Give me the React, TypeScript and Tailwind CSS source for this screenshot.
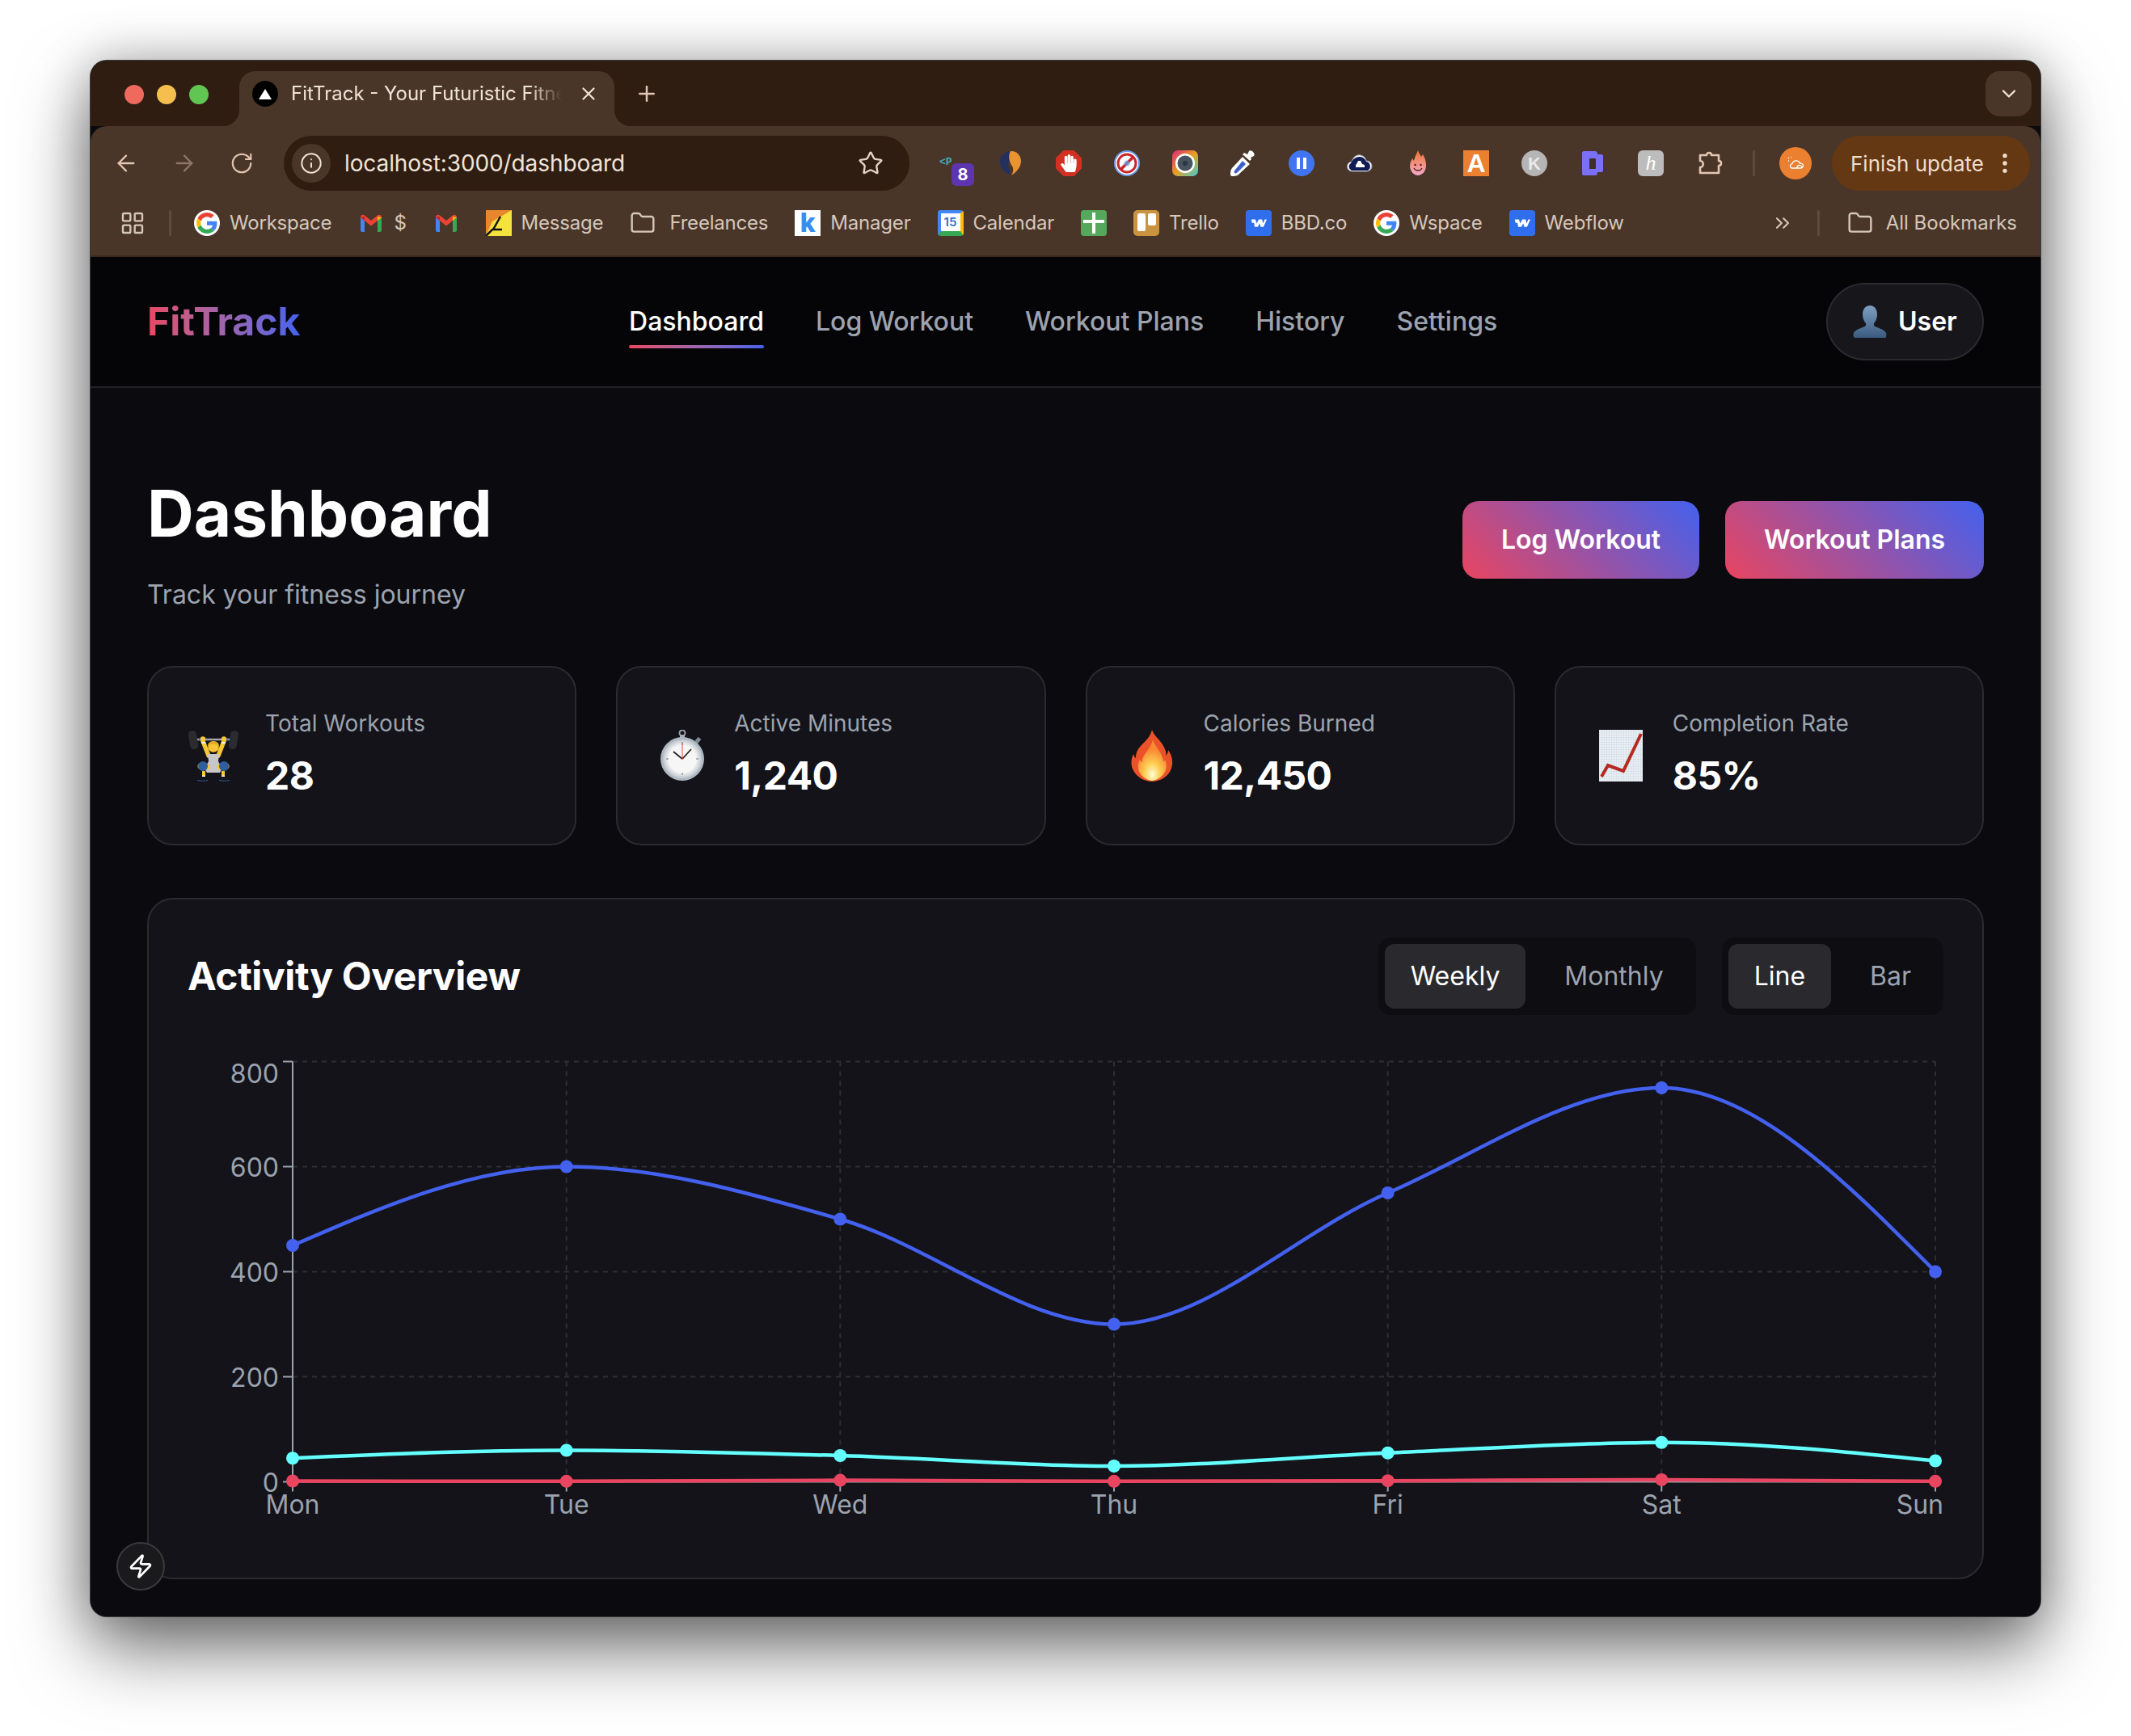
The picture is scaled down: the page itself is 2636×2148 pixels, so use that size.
import { ChevronDown, ArrowLeft, ArrowRight, RotateCw, Star, Info, Plus, X, EllipsisVertical, ChevronsRight, Folder, Zap, LayoutGrid } from "lucide-react";
import { FaHandPaper } from "react-icons/fa";

const DAYS = ["Mon", "Tue", "Wed", "Thu", "Fri", "Sat", "Sun"];
const XS = [362, 700.7, 1039.3, 1378, 1716.7, 2055.3, 2394];
const MINUTES = [450, 600, 500, 300, 550, 750, 400];
const KCAL = [45, 60, 50, 30, 55, 75, 40];
const WORKOUTS = [1.5, 1, 3, 1, 2, 4, 1];
const Y0 = 1833.5;
const yOf = (v: number) => Y0 - v * 0.65;

// same maths as d3 curveMonotoneX, the curve recharts uses for type="monotone"
function monotonePath(values: number[]) {
  const ys = values.map(yOf);
  const n = ys.length;
  const t: number[] = new Array(n).fill(0);
  for (let i = 1; i < n - 1; i++) {
    const h0 = XS[i] - XS[i - 1];
    const h1 = XS[i + 1] - XS[i];
    const s0 = (ys[i] - ys[i - 1]) / h0;
    const s1 = (ys[i + 1] - ys[i]) / h1;
    const p = (s0 * h1 + s1 * h0) / (h0 + h1);
    t[i] = (Math.sign(s0) + Math.sign(s1)) * Math.min(Math.abs(s0), Math.abs(s1), 0.5 * Math.abs(p)) || 0;
  }
  t[0] = (3 * (ys[1] - ys[0]) / (XS[1] - XS[0]) - t[1]) / 2;
  t[n - 1] = (3 * (ys[n - 1] - ys[n - 2]) / (XS[n - 1] - XS[n - 2]) - t[n - 2]) / 2;
  let d = `M${XS[0]},${ys[0]}`;
  for (let i = 0; i < n - 1; i++) {
    const dx = (XS[i + 1] - XS[i]) / 3;
    d += `C${XS[i] + dx},${ys[i] + dx * t[i]} ${XS[i + 1] - dx},${ys[i + 1] - dx * t[i + 1]} ${XS[i + 1]},${ys[i + 1]}`;
  }
  return d;
}

function GoogleIcon() {
  return (
    <span className="flex size-8 shrink-0 items-center justify-center rounded-full bg-white">
      <svg viewBox="0 0 48 48" className="size-[26px]">
        <path fill="#EA4335" d="M24 9.5c3.5 0 6.7 1.2 9.2 3.6l6.9-6.9C35.9 2.4 30.5 0 24 0 14.6 0 6.5 5.4 2.6 13.2l8 6.2C12.5 13.7 17.8 9.5 24 9.5z" />
        <path fill="#4285F4" d="M46.9 24.5c0-1.6-.1-3.1-.4-4.5H24v9h12.9c-.6 3-2.2 5.500-4.700 7.200l7.700 6c4.500-4.200 7-10.300 7-17.700z" />
        <path fill="#FBBC05" d="M10.500 28.600c-.5-1.400-.8-3-.8-4.600s.3-3.200.8-4.600l-8-6.200C.9 16.500 0 20.100 0 24s.9 7.500 2.600 10.800l7.900-6.200z" />
        <path fill="#34A853" d="M24 48c6.500 0 11.900-2.100 15.900-5.800l-7.700-6c-2.100 1.400-4.900 2.300-8.200 2.300-6.200 0-11.500-4.200-13.400-9.900l-8 6.200C6.500 42.600 14.600 48 24 48z" />
      </svg>
    </span>
  );
}

function GmailIcon() {
  return (
    <svg viewBox="0 0 32 32" className="size-8 shrink-0">
      <path fill="#4285F4" d="M3 8h5v19H5a2 2 0 0 1-2-2z" />
      <path fill="#34A853" d="M24 8h5v17a2 2 0 0 1-2 2h-3z" />
      <path fill="#EA4335" d="M3 9c0-3 3-4 5-2.500l8 6.500 8-6.500c2-1.500 5-.5 5 2.500l-5 4-8 6.500L8 13z" />
      <path fill="#C5221F" d="M3 9l5 4V8z" />
      <path fill="#FBBC05" d="M29 9l-5 4V8z" />
    </svg>
  );
}

function WebflowIcon() {
  return (
    <span className="flex size-8 shrink-0 items-center justify-center rounded-[4px] bg-[#2f6fed]">
      <svg viewBox="0 0 24 16" className="w-[20px]">
        <path fill="#fff" d="M1 3h6l2 6 3-6h5l1.500 6L21 3h3l-5 11h-4l-1.500-5-3 5H6L5 8H2z" />
      </svg>
    </span>
  );
}

function Bookmark({ icon, label, wide }: { icon: React.ReactNode; label?: string; wide?: boolean }) {
  return (
    <div className={`flex shrink-0 items-center ${wide ? "gap-[17px]" : "gap-3"}`}>
      {icon}
      {label && <span className="text-[24px] leading-8 tracking-[-0.2px] whitespace-nowrap text-[#d5c7bc]">{label}</span>}
    </div>
  );
}

function Ext({ children }: { children: React.ReactNode }) {
  return <div className="relative flex h-[68px] w-[72px] shrink-0 items-center justify-center">{children}</div>;
}

function Extensions() {
  return (
    <div className="ml-[17px] flex items-center">
      <Ext>
        <span className="absolute top-[25px] left-[20px] font-['Liberation_Mono',monospace] text-[13px] leading-4 font-bold text-[#47a9b8]">&lt;P</span>
        <span className="absolute top-[34px] left-[35px] flex h-[28px] w-[28px] items-center justify-center rounded-[6px] bg-[#5e35b1] text-[20px] font-bold text-white">8</span>
      </Ext>
      <Ext>
        <svg viewBox="0 0 32 32" className="size-8">
          <path fill="#24305e" d="M14 1C7 3 2 9 3 16c1 7 6 12 12 14 2-6-4-8-1-14 2-4 3-10 0-15z" />
          <path fill="#ea9331" d="M16 1c7-1 13 5 13 12 0 8-6 14-12 18 3-5 3-9 0-13-3-5-4-12-1-17z" />
        </svg>
      </Ext>
      <Ext>
        <span className="flex size-8 items-center justify-center bg-[#d32f23] [clip-path:polygon(30%_0,70%_0,100%_30%,100%_70%,70%_100%,30%_100%,0_70%,0_30%)]">
          <FaHandPaper className="size-[22px] text-white" />
        </span>
      </Ext>
      <Ext>
        <svg viewBox="0 0 32 32" className="size-8">
          <circle cx="16" cy="16" r="15" fill="#fff" stroke="#6a9bea" strokeWidth="2" />
          <circle cx="16" cy="16" r="11" fill="none" stroke="#c9262c" strokeWidth="3" />
          <path d="M8.500 23.500 23.500 8.500" stroke="#c9262c" strokeWidth="3.500" />
          <circle cx="16" cy="16" r="3.500" fill="#6a9bea" opacity=".7" />
        </svg>
      </Ext>
      <Ext>
        <svg viewBox="0 0 32 32" className="size-8">
          <defs>
            <linearGradient id="camGrad" x1="0" y1="0" x2="1" y2="1">
              <stop offset="0" stopColor="#e0247e" />
              <stop offset=".5" stopColor="#e8a020" />
              <stop offset="1" stopColor="#3fd0d8" />
            </linearGradient>
          </defs>
          <rect width="32" height="32" rx="7" fill="url(#camGrad)" />
          <circle cx="16" cy="16" r="12" fill="#fff" />
          <circle cx="16" cy="16" r="9.500" fill="#47535f" />
          <circle cx="16" cy="16" r="3" fill="#2c353e" />
        </svg>
      </Ext>
      <Ext>
        <svg viewBox="0 0 32 32" className="size-8">
          <path fill="#fff" d="M21 5l2-4c1-1 3-1 5 1 2 2 2 4 1 5l-4 2 1 2-2 2-9-8 2-2z" />
          <path fill="#fff" d="M15 8l9 9L10 30c-2 2-6 2-8 2-1 0-2-1-2-2 0-2 0-6 2-8z" />
          <path fill="#3d5fc9" d="M15 13l4 4-10 10c-1 1-3 2-4 1-1-1 0-3 1-4z" />
        </svg>
      </Ext>
      <Ext>
        <span className="flex size-8 items-center justify-center gap-[4px] rounded-full bg-[#4074f0]">
          <span className="h-[14px] w-[4px] bg-white" />
          <span className="h-[14px] w-[4px] bg-white" />
        </span>
      </Ext>
      <Ext>
        <svg viewBox="0 0 32 24" className="w-8">
          <path fill="#fff" stroke="#9aa0a8" strokeWidth="1" d="M7 22a6 6 0 0 1-1-12C8 4 12 1 17 2c4 1 6 3 7 7a6.500 6.500 0 0 1 1 13z" />
          <path fill="#101a55" d="M6 21a5 5 0 0 1-1-9c2-5 6-8 11-8 4 0 7 3 8 6a6 6 0 0 1 2 11zm5-4h11v-3l-3-1-2-4h-3l-2 4-1 1z" />
        </svg>
      </Ext>
      <Ext>
        <svg viewBox="0 0 24 32" className="h-8">
          <defs>
            <linearGradient id="flameFace" x1="0" y1="0" x2="0" y2="1">
              <stop offset="0" stopColor="#ee7433" />
              <stop offset="1" stopColor="#f5a9c8" />
            </linearGradient>
          </defs>
          <path fill="url(#flameFace)" d="M12 0c1 4 3 5 4 8 1-1 1-2 2-3 3 5 4 9 4 14 0 7-5 12-10 12S2 26 2 19c0-4 2-7 3-9l2 3c1-5 3-8 5-13z" />
          <circle cx="8.500" cy="18" r="1.300" fill="#5a2a20" />
          <circle cx="15.500" cy="18" r="1.300" fill="#5a2a20" />
          <path d="M7 22c2 4 8 4 10 0" fill="none" stroke="#5a2a20" strokeWidth="1.300" />
        </svg>
      </Ext>
      <Ext>
        <span className="flex size-8 items-center justify-center bg-[#ea8030] font-['Liberation_Sans',sans-serif] text-[32px] leading-8 font-bold text-white">A</span>
      </Ext>
      <Ext>
        <span className="flex size-8 items-center justify-center rounded-full bg-[#b5b5b5] font-['Liberation_Sans',sans-serif] text-[22px] font-bold text-[#e9e9e9]">K</span>
      </Ext>
      <Ext>
        <svg viewBox="0 0 26 32" className="h-8">
          <path fill="#7a70f5" d="M2 1h14c2 0 3 1 3 4h5c1 0 2 1 2 2v18c0 1-1 2-2 2h-5c0 3-1 4-3 4H2c-1 0-2-1-2-2V3c0-1 1-2 2-2z" />
          <rect x="9" y="10" width="8" height="13" fill="#3f2f28" rx="1" />
        </svg>
      </Ext>
      <Ext>
        <span className="flex size-8 items-center justify-center rounded-[6px] bg-[#bcbcbc] font-['Liberation_Serif',serif] text-[26px] leading-8 text-white italic">h</span>
      </Ext>
      <Ext>
        <svg viewBox="0 0 32 32" className="ml-[3px] size-8" fill="none" stroke="#e3c6b2" strokeWidth="2.600" strokeLinejoin="round">
          <path d="M3 6H11C11 2 17 2 17 6H26V13C30 13 30 19 26 19V28H3V21C8 21 8 13 3 13Z" />
        </svg>
      </Ext>
      <div className="ml-[18px] h-[32px] w-[3px] rounded-full bg-[#63493a]" />
      <div className="ml-[30px] flex size-10 items-center justify-center rounded-full bg-[#ea8030]">
        <svg viewBox="0 0 24 24" className="size-6" fill="none" stroke="#fff" strokeWidth="1.300">
          <path d="M7 18h12a3 3 0 0 0 1-5.500 4 4 0 0 0-2.500-.5A5 5 0 0 0 8 12.500 3 3 0 0 0 7 18z" />
          <path d="M14 18a3 3 0 0 1 6-1" />
          <path d="M3 5l1 1M7 4v1M3 9h1" />
        </svg>
      </div>
      <div className="ml-[25px] flex h-[68px] w-[245px] items-center rounded-full bg-[#653814] pl-[23px]">
        <span className="text-[26px] whitespace-nowrap text-[#f0dccd]">Finish update</span>
        <EllipsisVertical className="ml-[10px] size-8 text-[#f0dccd]" />
      </div>
    </div>
  );
}

function BrowserChrome() {
  return (
    <>
      <div className="flex h-[81px] shrink-0 items-end bg-[#2e1d10] pl-[42px]">
        <div className="mb-[27px] flex gap-[16px]">
          <span className="size-6 rounded-full bg-[#ee6a5f]" />
          <span className="size-6 rounded-full bg-[#f5bf4f]" />
          <span className="size-6 rounded-full bg-[#61c554]" />
        </div>
        <div className="relative ml-[38px] flex h-[68px] w-[464px] shrink-0 items-center rounded-t-[20px] bg-[#4a3628] pb-[12px] pl-[16px]">
          {/* flares joining the tab to the toolbar */}
          <span className="absolute bottom-0 -left-[20px] size-[20px] bg-[#4a3628]">
            <span className="block size-full rounded-br-[20px] bg-[#2e1d10]" />
          </span>
          <span className="absolute -right-[20px] bottom-0 size-[20px] bg-[#4a3628]">
            <span className="block size-full rounded-bl-[20px] bg-[#2e1d10]" />
          </span>
          <span className="flex size-8 shrink-0 items-center justify-center rounded-full bg-black">
            <span className="size-0 border-x-[8px] border-b-[13px] border-x-transparent border-b-white" />
          </span>
          <span className="ml-[16px] w-[335px] text-[24px] whitespace-nowrap text-[#f0e3d9] [mask-image:linear-gradient(to_right,black_88%,transparent)]">
            FitTrack - Your Futuristic Fitne
          </span>
          <X className="ml-[20px] size-[26px] shrink-0 text-[#f0e3d9]" />
        </div>
        <Plus className="mb-[25px] ml-[25px] size-[30px] text-[#e3c6b2]" />
        <div className="mb-[12px] ml-auto mr-[11px] flex h-[56px] w-[57px] items-center justify-center rounded-[18px] bg-[#4a3628]">
          <ChevronDown className="size-7 text-[#f0e3d9]" />
        </div>
      </div>
      <div className="flex h-[162px] shrink-0 flex-col rounded-t-[20px] border-b-2 border-[#3a2a1f] bg-[#4a3628] pt-[12px]">
        <div className="flex h-[68px] items-center">
          <ArrowLeft className="ml-[28px] size-8 text-[#e3c6b2]" strokeWidth={1.700} />
          <ArrowRight className="ml-[40px] size-8 text-[#8f7565]" strokeWidth={1.700} />
          <RotateCw className="ml-[40px] size-[30px] text-[#e3c6b2]" strokeWidth={1.700} />
          <div className="ml-[37px] flex h-[68px] w-[774px] shrink-0 items-center rounded-full bg-[#2e1d10] pl-[10px]">
            <span className="flex size-12 items-center justify-center rounded-full bg-[#4a3628]">
              <Info className="size-7 text-[#f0e3d9]" strokeWidth={1.700} />
            </span>
            <span className="ml-[17px] text-[28px] tracking-[-0.1px] whitespace-nowrap text-[#f0e3d9]">localhost:3000/dashboard</span>
            <Star className="mr-[32px] ml-auto size-8 text-[#e3d3c7]" strokeWidth={1.800} />
          </div>
          <Extensions />
        </div>
        <div className="mt-[16px] flex h-[48px] items-center gap-[32px] pl-[36px]">
          <div className="flex items-center gap-[29px]">
            <LayoutGrid className="size-[32px] text-[#d5c7bc]" strokeWidth={1.800} />
            <span className="h-[32px] w-[3px] rounded-full bg-[#63493a]" />
          </div>
          <div className="-ml-[4px] flex items-center gap-[33px]">
            <Bookmark icon={<GoogleIcon />} label="Workspace" />
            <Bookmark icon={<GmailIcon />} label="$" />
            <Bookmark icon={<GmailIcon />} />
            <Bookmark
              icon={
                <svg viewBox="0 0 32 32" className="size-8 shrink-0">
                  <rect width="32" height="32" fill="#f5e23c" />
                  <path fill="#e8862e" d="M0 0h32L8 14 0 32z" />
                  <path d="M0 32l8-8h12M18 8 9 24" fill="none" stroke="#111" strokeWidth="2.500" />
                </svg>
              }
              label="Message"
            />
            <Bookmark wide icon={<Folder className="size-8 shrink-0 text-[#d5c7bc]" strokeWidth={1.800} />} label="Freelances" />
            <Bookmark
              icon={<span className="flex size-8 shrink-0 items-center justify-center bg-white text-[32px] leading-8 font-extrabold text-[#3b8cf0]">k</span>}
              label="Manager"
            />
            <Bookmark
              icon={
                <span className="relative flex size-8 shrink-0 items-center justify-center overflow-hidden rounded-[4px] border-x-[4px] border-t-[4px] border-b-[6px] border-t-[#4285f4] border-r-[#fbbc05] border-b-[#34a853] border-l-[#4285f4] bg-white text-[15px] font-semibold text-[#2f6fd0]">
                  15
                </span>
              }
              label="Calendar"
            />
            <Bookmark
              icon={
                <span className="relative size-8 shrink-0 rounded-[4px] bg-[#55a85c]">
                  <span className="absolute top-[3px] left-[14px] h-[26px] w-[4px] bg-white" />
                  <span className="absolute top-[12px] left-[3px] h-[4px] w-[26px] bg-white" />
                </span>
              }
            />
            <Bookmark
              icon={
                <span className="flex size-8 shrink-0 gap-[3px] rounded-[5px] bg-[#c99340] px-[4.5px] py-[4px]">
                  <span className="h-[22px] w-[10px] rounded-[2px] bg-white" />
                  <span className="h-[15px] w-[10px] rounded-[2px] bg-white" />
                </span>
              }
              label="Trello"
            />
            <Bookmark icon={<WebflowIcon />} label="BBD.co" />
            <Bookmark icon={<GoogleIcon />} label="Wspace" />
            <Bookmark icon={<WebflowIcon />} label="Webflow" />
          </div>
          <ChevronsRight className="ml-auto size-7 text-[#d5c7bc]" strokeWidth={1.800} />
          <span className="-ml-[3px] h-[32px] w-[3px] rounded-full bg-[#63493a]" />
          <div className="mr-[29px] ml-[2px] flex items-center gap-[16px]">
            <Folder className="size-8 text-[#d5c7bc]" strokeWidth={1.800} />
            <span className="text-[24px] whitespace-nowrap text-[#d5c7bc]">All Bookmarks</span>
          </div>
        </div>
      </div>
    </>
  );
}

function TopNav() {
  const links = ["Dashboard", "Log Workout", "Workout Plans", "History", "Settings"];
  return (
    <header className="flex h-[162px] shrink-0 items-center justify-between border-b-2 border-[#222228] bg-[#050508] px-[70px]">
      <span className="bg-linear-to-r from-[#e94560] to-[#4361ee] bg-clip-text text-[48px] font-bold text-transparent">FitTrack</span>
      <nav className="flex gap-[64px]">
        {links.map((l, i) => (
          <span key={l} className={`relative text-[32px] leading-[48px] font-medium ${i === 0 ? "text-white" : "text-[#9ca3af]"}`}>
            {l}
            {i === 0 && <span className="absolute inset-x-0 -bottom-[9px] h-[4px] rounded-full bg-linear-to-r from-[#e94560] to-[#4361ee]" />}
          </span>
        ))}
      </nav>
      <div className="flex h-[96px] w-[195px] items-center gap-[14px] rounded-full border-2 border-[#2a2a30] bg-[#16161b] pl-[31px]">
        <svg viewBox="0 0 42 42" className="size-[42px] shrink-0">
          <defs>
            <linearGradient id="bustGrad" x1="0" y1="0" x2="0" y2="1">
              <stop offset="0" stopColor="#7f9fc0" />
              <stop offset="1" stopColor="#3a5a80" />
            </linearGradient>
          </defs>
          <path fill="url(#bustGrad)" d="M21 1c6 0 9 5 9 11 0 5-2 9-4 11v3c2 2 13 4 15 9 1 2 0 6-1 6H2c-1 0-2-4-1-6 2-5 13-7 15-9v-3c-2-2-4-6-4-11 0-6 3-11 9-11z" />
        </svg>
        <span className="text-[32px] font-semibold text-white">User</span>
      </div>
    </header>
  );
}

function LifterIcon() {
  return (
    <svg viewBox="0 0 64 64" className="size-16">
      <path d="M8 12 56 12" stroke="#a5a5aa" strokeWidth="2.500" />
      <rect x="2" y="1" width="10" height="23" rx="4.500" fill="#2b2b30" transform="rotate(-10 7 12)" />
      <rect x="52" y="1" width="10" height="23" rx="4.500" fill="#2b2b30" transform="rotate(10 57 12)" />
      <path d="M14 12h5M45 12h5" stroke="#3f6fc0" strokeWidth="3" />
      <path d="M19 14 26 32M45 14 38 32" stroke="#f7c535" strokeWidth="5.500" strokeLinecap="round" />
      <circle cx="19" cy="11.500" r="3.200" fill="#f7c535" />
      <circle cx="45" cy="11.500" r="3.200" fill="#f7c535" />
      <path d="M17 16h5M42 16h5" stroke="#f2f2f2" strokeWidth="2" />
      <path fill="#c6c6cb" d="M25 30h14l-1 9 5 9-3 5H24l-3-5 5-9z" />
      <path d="M24 46 16 45M40 46 48 45" stroke="#f7c535" strokeWidth="7" strokeLinecap="round" />
      <circle cx="32" cy="21" r="6.800" fill="#f7c535" />
      <path fill="#e2ad24" d="M25 20c0-8 14-8 14 0-4-3-10-3-14 0z" />
      <circle cx="19" cy="45" r="6" fill="#2f5f9e" />
      <circle cx="45" cy="45" r="6" fill="#2f5f9e" />
      <path d="M20 51v6M44 51v6" stroke="#f7c535" strokeWidth="4" />
      <path d="M20 56.500v1.500M44 56.500v1.500" stroke="#f2f2f2" strokeWidth="4" />
      <path fill="#15151a" d="M18 58h5l2 3c0 1-10 2-13 0zM46 58h-5l-2 3c0 1 10 2 13 0z" />
      <path d="M12 62.500c4 1 9 1 13 0M39 62.500c4 1 9 1 13 0" stroke="#2f5f9e" strokeWidth="1" fill="none" />
    </svg>
  );
}

function WatchIcon() {
  return (
    <svg viewBox="0 0 64 64" className="size-16">
      <defs>
        <radialGradient id="watchFace">
          <stop offset=".7" stopColor="#f6f6f6" />
          <stop offset="1" stopColor="#bfc5cc" />
        </radialGradient>
      </defs>
      <circle cx="32" cy="4" r="3.500" fill="none" stroke="#9aa3ad" strokeWidth="2" />
      <rect x="29" y="6" width="6" height="6" fill="#a7aeb6" />
      <rect x="49" y="10" width="5" height="7" rx="1" fill="#7f8892" transform="rotate(40 52 13)" />
      <circle cx="32" cy="36" r="27" fill="#aeb8c2" />
      <circle cx="32" cy="36" r="24" fill="url(#watchFace)" />
      <path d="M32 36 21 27M32 36l11-12" stroke="#222" strokeWidth="1.800" />
      <path d="M32 36V15" stroke="#e0582a" strokeWidth="1" />
      <path d="M32 16v3M32 53v3M12 36h3M49 36h3" stroke="#777" strokeWidth="1" />
    </svg>
  );
}

function FlameIcon() {
  return (
    <svg viewBox="0 0 64 64" className="size-16">
      <defs>
        <radialGradient id="flameCore" cx=".5" cy=".85" r=".6">
          <stop offset="0" stopColor="#fffcd8" />
          <stop offset=".45" stopColor="#fdd055" />
          <stop offset="1" stopColor="#f98c33" />
        </radialGradient>
      </defs>
      <path fill="#ec5229" d="M32 0c3 9 12 13 16 24 1 3 2 5 1 8 2-2 3-4 3-7 6 8 7 19 2 27-4 7-13 12-22 12S14 59 10 52C5 45 6 36 9 30c1 2 1 4 3 5 0-8 3-12 8-17 5-5 10-10 12-18z" />
      <path fill="url(#flameCore)" d="M33 12c2 8 10 14 12 23 1 2 1 3 1 5 1-1 2-2 2-3 3 6 2 14-2 18-3 4-9 8-14 8s-11-4-14-8c-4-5-4-13-1-18 1 1 1 3 3 3-1-9 11-16 13-28z" />
    </svg>
  );
}

function ChartIcon() {
  return (
    <svg viewBox="0 0 54 64" className="h-16 w-[54px]">
      <defs>
        <pattern id="chartGrid" width="3" height="3" patternUnits="userSpaceOnUse">
          <rect width="3" height="3" fill="#eaeff4" />
          <path d="M0 0h3M0 0v3" stroke="#bcc9d6" strokeWidth=".6" />
        </pattern>
      </defs>
      <rect width="54" height="64" fill="url(#chartGrid)" />
      <path d="M3 58 11 44l19 7L52 5" fill="none" stroke="#b52a20" strokeWidth="4" />
    </svg>
  );
}

const STATS = [
  { label: "Total Workouts", value: "28", icon: <LifterIcon /> },
  { label: "Active Minutes", value: "1,240", icon: <WatchIcon /> },
  { label: "Calories Burned", value: "12,450", icon: <FlameIcon /> },
  { label: "Completion Rate", value: "85%", icon: <ChartIcon /> },
];

function StatCard({ label, value, icon }: { label: string; value: string; icon: React.ReactNode }) {
  return (
    <div className="flex h-[222px] items-center gap-[32px] rounded-[32px] border-2 border-[#2a2a30] bg-[#131319] pl-[48px]">
      <div className="flex w-[64px] shrink-0 justify-center">{icon}</div>
      <div>
        <p className="text-[28px] leading-[40px] text-[#9ca3af]">{label}</p>
        <p className="mt-[9px] text-[48px] leading-[72px] font-bold tracking-[-0.6px] text-white">{value}</p>
      </div>
    </div>
  );
}

function Segmented({ items }: { items: string[] }) {
  return (
    <div className="flex h-[96px] gap-[16px] rounded-[16px] bg-[#0d0d12] p-[8px]">
      {items.map((t, i) => (
        <span
          key={t}
          className={`flex items-center rounded-[12px] px-[32px] text-[32px] ${i === 0 ? "bg-[#2a2a2e] text-white" : "text-[#9ca3af]"}`}
        >
          {t}
        </span>
      ))}
    </div>
  );
}

function Series({ values, color }: { values: number[]; color: string }) {
  return (
    <g>
      <path d={monotonePath(values)} fill="none" stroke={color} strokeWidth="4.500" />
      {values.map((v, i) => (
        <circle key={i} cx={XS[i]} cy={yOf(v)} r="8" fill={color} />
      ))}
    </g>
  );
}

function ActivityChart() {
  const ticks = [800, 600, 400, 200, 0];
  return (
    <svg viewBox="232 1290 2172 613" className="mt-[34px] block h-[613px] w-[2172px]" fontFamily="Inter, sans-serif" fontSize="32" fill="#9ca3af">
      <g stroke="#2e2e34" strokeWidth="2" strokeDasharray="6 6">
        {ticks.slice(0, 4).map((t) => (
          <line key={t} x1={XS[0]} x2={XS[6]} y1={yOf(t)} y2={yOf(t)} />
        ))}
        {XS.map((x) => (
          <line key={x} x1={x} x2={x} y1={yOf(800)} y2={Y0} />
        ))}
      </g>
      <g stroke="#9ca3af" strokeWidth="2">
        <line x1={XS[0]} x2={XS[0]} y1={yOf(800)} y2={Y0} />
        <line x1={XS[0]} x2={XS[6]} y1={Y0} y2={Y0} />
        {ticks.map((t) => (
          <line key={t} x1={XS[0] - 12} x2={XS[0]} y1={yOf(t)} y2={yOf(t)} />
        ))}
        {XS.map((x) => (
          <line key={x} x1={x} x2={x} y1={Y0} y2={Y0 + 12} />
        ))}
      </g>
      {ticks.map((t) => (
        <text key={t} x={345} y={t === 800 ? 1340 : yOf(t) + 12} textAnchor="end">
          {t}
        </text>
      ))}
      {DAYS.map((d, i) => (
        <text key={d} x={i === 6 ? 2404 : XS[i]} y={1873} textAnchor={i === 6 ? "end" : "middle"}>
          {d}
        </text>
      ))}
      <Series values={MINUTES} color="#4361ee" />
      <Series values={KCAL} color="#64ffff" />
      <Series values={WORKOUTS} color="#e94560" />
    </svg>
  );
}

export default function App() {
  return (
    <div className="min-h-[2148px] bg-white pt-[75px] pl-[112px] font-['Inter',sans-serif]">
      <div className="relative flex h-[1925px] w-[2412px] flex-col overflow-hidden rounded-[20px] bg-[#0a0a0f] shadow-[0_0_0_1px_#3a3a3a,0_40px_90px_rgba(0,0,0,0.55),0_0_60px_rgba(0,0,0,0.25)]">
        <BrowserChrome />
        <TopNav />
        <main className="px-[70px] pt-[93px]">
          <div className="flex items-center justify-between">
            <div>
              <h1 className="text-[80px] leading-[124px] font-bold text-white">Dashboard</h1>
              <p className="mt-[12px] text-[32px] leading-[54px] text-[#9ca3af]">Track your fitness journey</p>
            </div>
            <div className="flex gap-[32px]">
              <button className="h-[96px] w-[293px] rounded-[20px] bg-[linear-gradient(45deg,#e94560,#4361ee)] text-[32px] font-semibold text-white">Log Workout</button>
              <button className="h-[96px] w-[320px] rounded-[20px] bg-[linear-gradient(45deg,#e94560,#4361ee)] text-[32px] font-semibold text-white">Workout Plans</button>
            </div>
          </div>
          <div className="mt-[61px] grid grid-cols-4 gap-[49px]">
            {STATS.map((s) => (
              <StatCard key={s.label} {...s} />
            ))}
          </div>
          <section className="mt-[65px] h-[843px] rounded-[32px] border-2 border-[#2a2a30] bg-[#131319] px-[48px] pt-[47px]">
            <div className="flex items-center">
              <h2 className="text-[48px] font-bold tracking-[-0.4px] text-white">Activity Overview</h2>
              <div className="ml-auto flex gap-[32px]">
                <Segmented items={["Weekly", "Monthly"]} />
                <Segmented items={["Line", "Bar"]} />
              </div>
            </div>
            <ActivityChart />
          </section>
        </main>
        {/* next.js dev indicator */}
        <div className="absolute bottom-[32px] left-[32px] flex h-[60px] w-[60px] items-center justify-center rounded-full border-2 border-[#3a3a3e] bg-[#1a1a1d]">
          <Zap className="size-[32px] text-white" strokeWidth={2} />
        </div>
      </div>
    </div>
  );
}
